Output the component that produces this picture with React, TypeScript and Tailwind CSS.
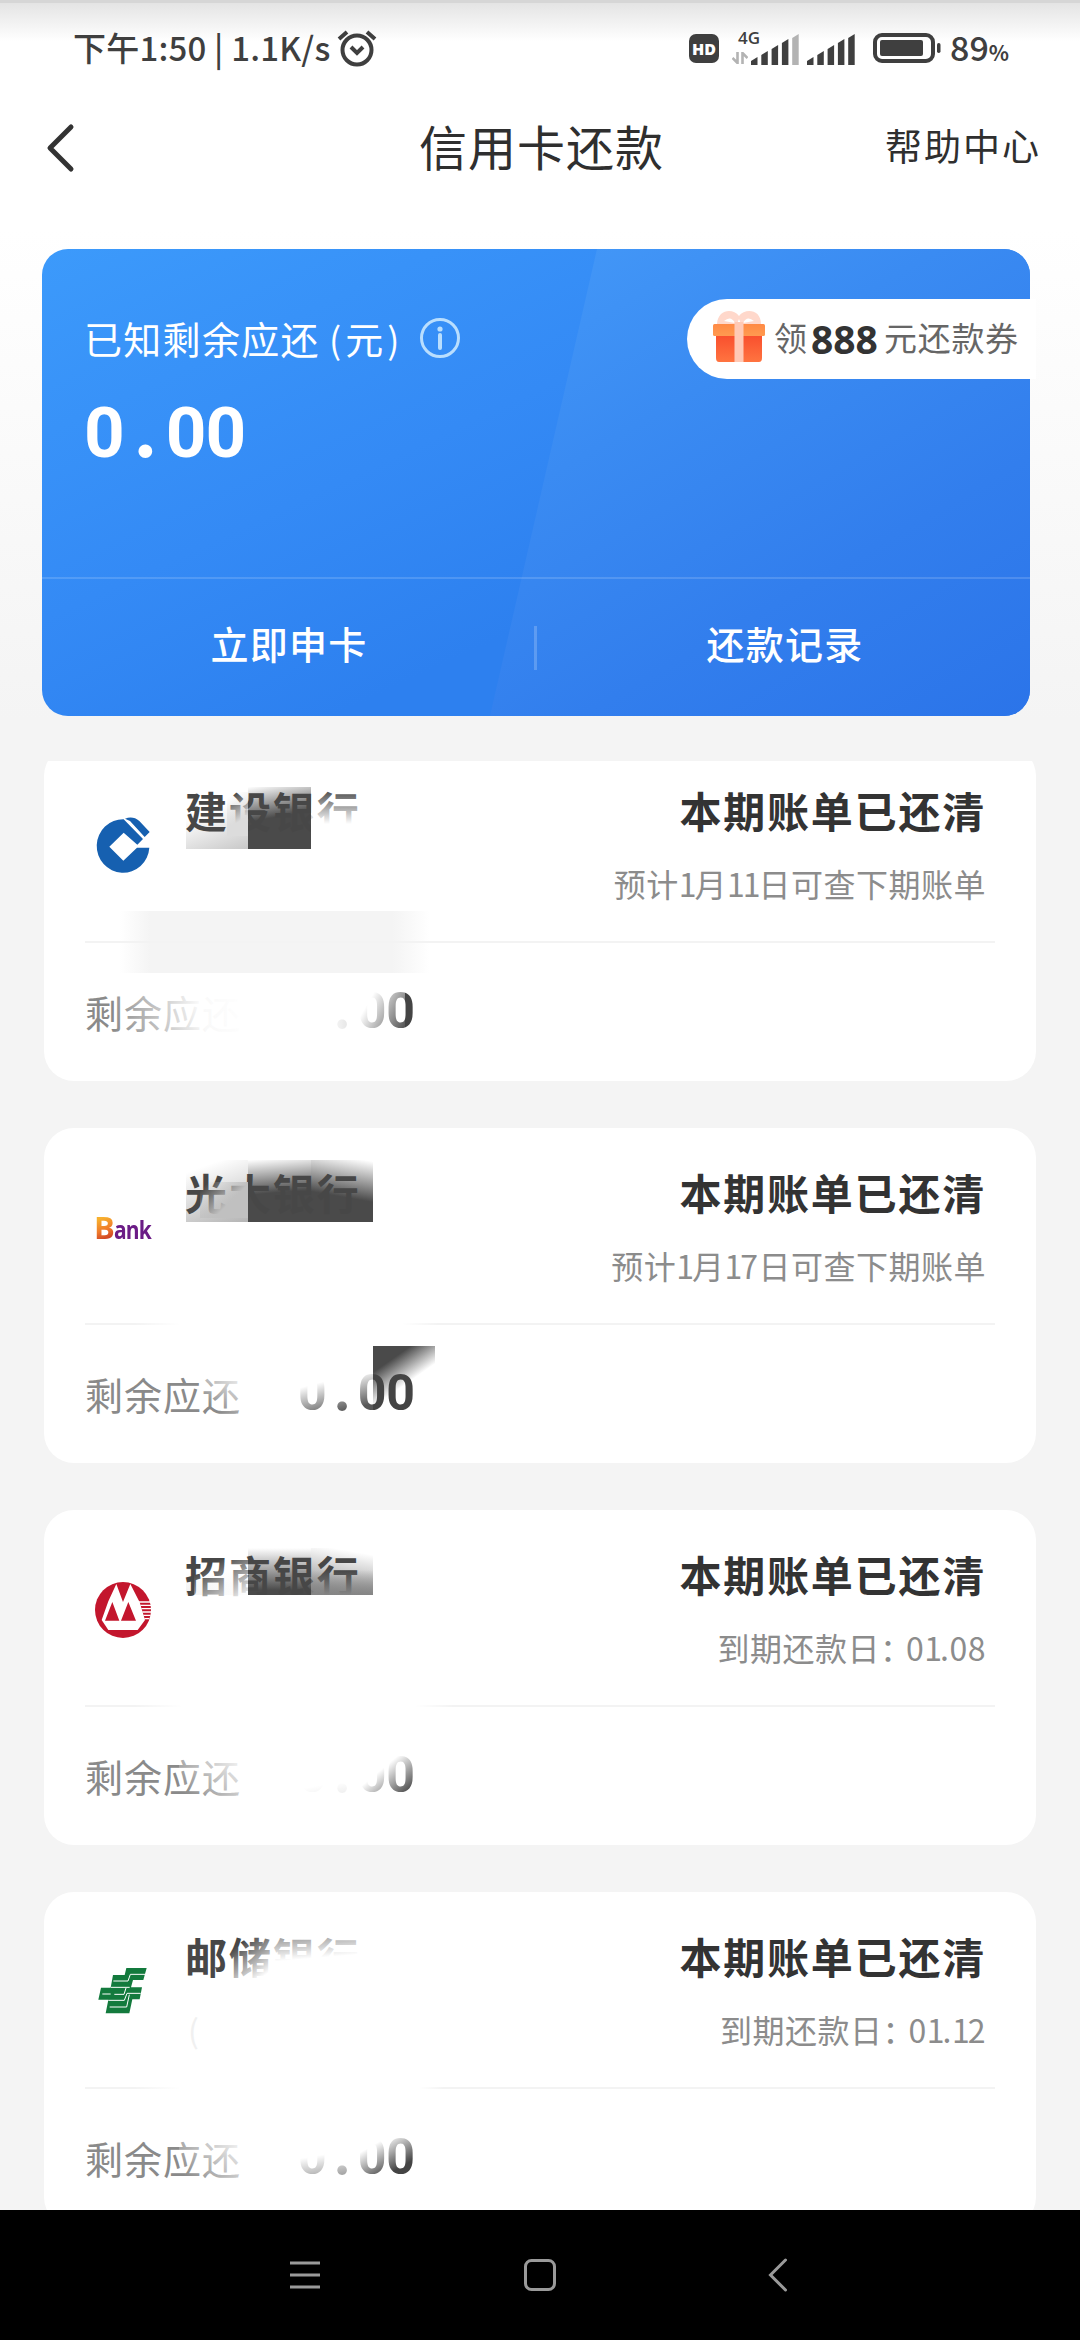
import React from 'react';

interface BankCardData {
  name: string;
  note: string;
  logo: React.ReactNode;
  tail?: string;
  // smudges painted under and over the text
  behind: string[];
  front: string[];
}

const CcbLogo = () => (
  <svg width="60" height="60" viewBox="189 198 180 180" fill="#1660b0">
    <path d="M358 293A79 80 0 1 1 281 208L339 267L322 284L281 248L238 290L280 332L321 293Z" />
    <path d="M285 206Q309 197 328 213L359 246L344 261L300 213Z" />
  </svg>
);

const EverbrightLogo = () => (
  <div className="flex w-[60px] items-baseline pl-px font-['Open_Sans'] text-[25px] leading-[58px] font-bold tracking-[-1px]">
    <span className="bg-[linear-gradient(160deg,#f7b02e_35%,#ef7a2b_55%,#c22f22_75%)] bg-clip-text text-[31px] text-transparent">B</span>
    <span className="origin-left scale-x-[0.84] text-[#6b1c86]">ank</span>
  </div>
);

const CmbLogo = () => (
  <svg width="60" height="60" viewBox="190 238 180 180">
    <circle cx="280" cy="328" r="84" fill="#c3162d" />
    <path d="M260 250L280 304L302 250L330 305L346 358L324 388H236L216 358L236 302Z" fill="#fff" />
    <path d="M248 304L226 360H269ZM296 304L274 360H319Z" fill="#c3162d" />
    <path d="M262 304L271 340L282 304Z" fill="#fff" />
    <path d="M328 304H361M332 314H364M335 324H365M338 334H364M341 344H363M344 354H359" stroke="#fff" strokeWidth="4" />
  </svg>
);

const PostalLogo = () => (
  <svg width="60" height="60" viewBox="190 250 180 180">
    <path
      d="M290 268H351L341 304H310L304 326H337L330 362H308L299 404H228L236 363H206L214 327H243L250 289H285Z"
      fill="#137a3d"
    />
    <path
      d="M251 307H295L302 287H347M244 326H300M218 346H243M254 347H283L289 328M236 365H284L292 344H333M240 385H291L299 348"
      fill="none"
      stroke="#fff"
      strokeWidth="3"
    />
  </svg>
);

const cards: BankCardData[] = [
  {
    name: '建设银行',
    note: '预计1月11日可查下期账单',
    logo: <CcbLogo />,
    behind: [
      'left-[142px] top-[50px] w-[62px] h-[53px] bg-[linear-gradient(160deg,transparent_30%,#c8c8c8)]',
      'left-[204px] top-[41px] w-[63px] h-[62px] bg-[linear-gradient(170deg,transparent,#4a4a4a_48%)]',
      'left-[76px] top-[165px] w-[310px] h-[62px] bg-[linear-gradient(90deg,transparent,#f4f4f4_10%,#f4f4f4_88%,transparent)]',
    ],
    front: [
      'left-[183px] top-[46px] w-[21px] h-[44px] bg-[linear-gradient(150deg,transparent_10%,#dcdcdc_65%)]',
      'left-[267px] top-[42px] w-[64px] h-[48px] bg-[linear-gradient(180deg,rgba(255,255,255,0.1)_10%,#fff_75%)]',
      'left-[70px] top-[240px] w-[130px] h-[50px] bg-[linear-gradient(75deg,transparent,rgba(255,255,255,0.5)_35%,rgba(255,255,255,0.95)_65%,#fff)]',
      'left-[250px] top-[240px] w-[65px] h-[50px] bg-[linear-gradient(90deg,#fff_50%,rgba(255,255,255,0.8))]',
      'left-[315px] top-[240px] w-[46px] h-[50px] bg-[linear-gradient(120deg,#fff_25%,transparent)]',
    ],
  },
  {
    name: '光大银行',
    note: '预计1月17日可查下期账单',
    logo: <EverbrightLogo />,
    behind: [
      'left-[142px] top-[32px] w-[62px] h-[62px] bg-[linear-gradient(160deg,transparent_15%,#b4b4b4)]',
      'left-[204px] top-[32px] w-[63px] h-[62px] bg-[linear-gradient(175deg,transparent,#4a4a4a_52%)]',
      'left-[267px] top-[32px] w-[62px] h-[62px] bg-[linear-gradient(190deg,transparent_2%,#4a4a4a_58%)]',
      'left-[329px] top-[218px] w-[62px] h-[62px] bg-[linear-gradient(145deg,#4a4a4a_25%,transparent_58%)]',
    ],
    front: [
      'left-[156px] top-[54px] w-[48px] h-[36px] bg-[linear-gradient(135deg,transparent_10%,#c0c0c0_60%)]',
      'left-[90px] top-[190px] w-[305px] h-[12px] bg-[linear-gradient(90deg,transparent,#fff_15%,#fff_88%,transparent)]',
      'left-[155px] top-[245px] w-[45px] h-[45px] bg-[linear-gradient(35deg,transparent_25%,#fff)]',
      'left-[250px] top-[240px] w-[79px] h-[50px] bg-[linear-gradient(165deg,#fff_30%,rgba(255,255,255,0.1)_80%)]',
    ],
  },
  {
    name: '招商银行',
    note: '到期还款日：01.08',
    logo: <CmbLogo />,
    behind: [
      'left-[142px] top-[38px] w-[62px] h-[47px] bg-[linear-gradient(180deg,transparent_50%,#f0f0f0)]',
      'left-[204px] top-[38px] w-[63px] h-[47px] bg-[linear-gradient(180deg,transparent,#4a4a4a_90%)]',
      'left-[267px] top-[38px] w-[62px] h-[47px] bg-[linear-gradient(190deg,transparent_12%,#858585)]',
    ],
    front: [
      'left-[150px] top-[50px] w-[54px] h-[40px] bg-[linear-gradient(150deg,transparent_20%,#fff)]',
      'left-[204px] top-[85px] w-[125px] h-[8px] bg-white',
      'left-[267px] top-[60px] w-[62px] h-[25px] bg-[linear-gradient(180deg,transparent,#858585)]',
      'left-[90px] top-[190px] w-[320px] h-[12px] bg-[linear-gradient(90deg,transparent,#fff_15%,#fff_88%,transparent)]',
      'left-[135px] top-[245px] w-[65px] h-[45px] bg-[linear-gradient(45deg,transparent_10%,#fff)]',
      'left-[250px] top-[240px] w-[65px] h-[50px] bg-[linear-gradient(170deg,#fff_65%,rgba(255,255,255,0.85))]',
      'left-[315px] top-[240px] w-[60px] h-[50px] bg-[linear-gradient(140deg,#fff_38%,transparent_85%)]',
    ],
  },
  {
    name: '邮储银行',
    note: '到期还款日：01.12',
    logo: <PostalLogo />,
    tail: '(',
    behind: [],
    front: [
      'left-[186px] top-[40px] w-[41px] h-[56px] bg-[linear-gradient(145deg,transparent_22%,#fff_80%)]',
      'left-[227px] top-[40px] w-[104px] h-[56px] bg-[linear-gradient(175deg,rgba(255,255,255,0.5)_12%,#fff_46%)]',
      'left-[90px] top-[190px] w-[310px] h-[12px] bg-[linear-gradient(90deg,transparent,#fff_15%,#fff_92%,transparent)]',
      'left-[135px] top-[245px] w-[65px] h-[45px] bg-[linear-gradient(45deg,transparent_10%,#fff)]',
      'left-[250px] top-[240px] w-[65px] h-[50px] bg-[linear-gradient(170deg,#fff_45%,rgba(255,255,255,0.3))]',
      'left-[315px] top-[240px] w-[60px] h-[50px] bg-[linear-gradient(150deg,#fff_25%,transparent_70%)]',
    ],
  },
];

const SignalBars = ({ weak = false }: { weak?: boolean }) => (
  <svg width="48" height="31" viewBox="0 0 48 31" fill="#3f3f3f">
    <path d="M0 31V27L6.5 23V31Z" />
    <path d="M10.3 31V21L16.8 17V31Z" />
    <path d="M20.6 31V15L27.1 11V31Z" />
    <path d="M30.9 31V9L37.4 5V31Z" />
    <path d="M41.2 31V4L47.7 0V31Z" fill={weak ? '#b3b3b3' : '#3f3f3f'} />
  </svg>
);

const StatusBar = () => (
  <div className="flex h-[98px] shrink-0 items-start border-t-[3px] border-[#d6d6d6] bg-linear-to-b from-[#e4e4e4] to-white to-40% pl-[73px] text-[#3f3f3f]">
    <span className="mt-[22px] w-[262px] text-[33px] leading-[44px] font-medium tracking-[0.2px] whitespace-nowrap">
      下午1:50 | 1.1K/s
    </span>
    <svg className="mt-[26px] ml-[1px]" width="42" height="38" viewBox="0 0 42 38" fill="none" stroke="#3f3f3f" strokeWidth="4">
      <circle cx="21" cy="21" r="14.5" />
      <path d="M15 18L21 24L27 18M3 10L11 3M31 3L39 10" />
    </svg>
    <div className="mt-[31px] ml-[311px] flex h-[29px] w-[30px] items-center justify-center rounded-[7px] bg-[#3f3f3f] font-['Open_Sans'] text-[16px] font-extrabold text-white">
      HD
    </div>
    <div className="mt-[26px] ml-[13px] flex h-[36px] w-[28px] flex-col items-end">
      <span className="font-['Open_Sans'] text-[17px] leading-[18px] font-semibold">4G</span>
      <svg className="mt-[5px] mr-[12px]" width="16" height="12" viewBox="0 0 16 12" fill="none" stroke="#b3b3b3" strokeWidth="2.6">
        <path d="M5.5 0V11L0.5 6M10.5 12V1L15.5 6" />
      </svg>
    </div>
    <div className="mt-[31px] -ml-[9px] flex gap-[8px]">
      <SignalBars weak />
      <SignalBars />
    </div>
    <svg className="mt-[30px] ml-[18px]" width="68" height="30" viewBox="0 0 68 30">
      <rect x="2" y="2" width="58" height="26" rx="7" fill="none" stroke="#3f3f3f" strokeWidth="4" />
      <rect x="7" y="7" width="43" height="16" rx="2" fill="#3f3f3f" />
      <rect x="64" y="10" width="3.5" height="10" rx="1.7" fill="#3f3f3f" />
    </svg>
    <span className="mt-[22px] ml-[9px] text-[34px] leading-[44px] font-medium">
      89<span className="text-[21px] font-bold">%</span>
    </span>
  </div>
);

const GiftIcon = () => (
  <svg className="-mt-[6px]" width="52" height="54" viewBox="0 0 52 54">
    <defs>
      <linearGradient id="giftLid" x1="0" y1="0" x2="0" y2="1">
        <stop offset="0" stopColor="#ff8a45" />
        <stop offset="1" stopColor="#ff9a50" />
      </linearGradient>
      <linearGradient id="giftBox" x1="0" y1="0" x2="0" y2="1">
        <stop offset="0" stopColor="#f9502e" />
        <stop offset="1" stopColor="#ff7440" />
      </linearGradient>
    </defs>
    <path d="M26 7C20 -1 5 0 4 15H24L26 10L28 15H48C48 0 32 -1 26 7Z" fill="#ffd8cb" />
    <path d="M11 12Q18 6 22 14ZM41 12Q34 6 30 14Z" fill="#fff" />
    <path d="M3 27H49V49Q49 53 46 53H6Q3 53 3 49Z" fill="url(#giftBox)" />
    <rect y="15" width="52" height="12" rx="1.5" fill="url(#giftLid)" />
    <rect x="21.5" y="13" width="9" height="40" fill="#ffc9b5" />
  </svg>
);

// amount with a monospaced point
const Amount = ({ dotClass }: { dotClass: string }) => (
  <>
    0<span className={dotClass}>.</span>00
  </>
);

// narrow ones and colon, as in the phone's system font
const Note = ({ text }: { text: string }) => (
  <>
    {text.split(/(1+|：)/).map((part, i) => {
      if (part.startsWith('1')) return <span key={i} className="tracking-[-2px]">{part}</span>;
      if (part === '：') return <span key={i} className="tracking-[-6px]">{part}</span>;
      return part;
    })}
  </>
);

const SummaryCard = () => (
  <div className="relative mx-[42px] mt-[52px] flex h-[467px] w-[988px] shrink-0 flex-col rounded-[26px] bg-[linear-gradient(155deg,#3c9afb,#348af5_40%,#2d80ef_65%,#2d80ef)] text-white">
    <div className="absolute inset-0 rounded-[26px] bg-[linear-gradient(150deg,#4499f8_25%,#3a8bf2_50%,#327eed_75%,#2b74e9)] [clip-path:polygon(555px_0,100%_0,100%_100%,448px_100%)]" />
    <div className="relative flex h-[328px] flex-col pl-[42px]">
      <div className="mt-[67px] flex items-center">
        <span className="w-[239px] text-[38px] leading-[44px] tracking-[1.3px] whitespace-nowrap">已知剩余应还</span>
        <span className="ml-[6px] text-[36px] leading-[44px]">(</span>
        <span className="ml-[4px] text-[38px] leading-[44px]">元</span>
        <span className="ml-[4px] text-[36px] leading-[44px]">)</span>
        <svg className="ml-[20px]" width="42" height="42" viewBox="0 0 42 42" fill="none" stroke="#b9defe" strokeWidth="3">
          <circle cx="21" cy="21" r="18.5" />
          <path d="M21 18V31" strokeWidth="4" strokeLinecap="round" />
          <circle cx="21" cy="12" r="2.6" fill="#b9defe" stroke="none" />
        </svg>
      </div>
      <span className="mt-[28px] font-['Roboto'] text-[71px] leading-[80px] font-bold tracking-[-1px]">
        <Amount dotClass="inline-block w-[42px] text-center font-['Inter'] text-[80px] leading-none" />
      </span>
    </div>
    <div className="relative flex flex-1 items-center border-t-[2px] border-white/15 text-[38px] font-medium">
      <span className="flex-1 pb-[10px] pl-[2px] text-center tracking-[1.3px]">立即申卡</span>
      <i className="h-[44px] w-[3px] bg-white/20" />
      <span className="flex-1 pb-[10px] pl-[3px] text-center tracking-[1.3px]">还款记录</span>
    </div>
    <div className="absolute top-[50px] left-[645px] flex h-[80px] w-[349px] items-center rounded-l-full bg-white pl-[26px] text-[33px] text-[#666]">
      <GiftIcon />
      <span className="-mt-[2px] ml-[9px]">领</span>
      <b className="ml-[4px] w-[72px] font-['Open_Sans'] text-[39px] leading-[60px] text-[#333]">888</b>
      <span className="-mt-[2px] ml-[1px] tracking-[0.7px] whitespace-nowrap">元还款券</span>
    </div>
  </div>
);

const BankCard = ({ card }: { card: BankCardData }) => (
  <div className="relative h-[335px] shrink-0 rounded-[30px] bg-white">
    {card.behind.map((cls) => (
      <div key={cls} className={`absolute ${cls}`} />
    ))}
    <div className="relative mx-[41px] flex h-[197px] border-b-[2px] border-[#f3f3f3]">
      <div className="mt-[70px] ml-[8px] h-[60px] w-[60px]">{card.logo}</div>
      <div className="mt-[34px] ml-[32px] flex flex-col">
        <span className="text-[42px] leading-[60px] font-bold tracking-[1.9px] text-[#474747]">{card.name}</span>
        <span className="mt-[20px] ml-[3px] text-[32px] leading-[46px] text-[#f0f0f0]">{card.tail}</span>
      </div>
      <div className="mt-[34px] mr-[9px] ml-auto flex flex-col items-end">
        <span className="text-[42px] leading-[60px] font-bold tracking-[1.8px] text-[#333]">本期账单已还清</span>
        <span className="mt-[20px] text-[32px] leading-[46px] tracking-[0.5px] text-[#8c8c8c]">
          <Note text={card.note} />
        </span>
      </div>
    </div>
    <div className="relative flex items-center pt-[41px] pl-[41px]">
      <span className="w-[213px] text-[38px] leading-[56px] tracking-[1px] text-[#8a8a8a]">剩余应还</span>
      <span className="-mt-[9px] h-[56px] font-['Roboto'] text-[50px] leading-[56px] font-bold text-[#444]">
        <Amount dotClass="inline-block w-[31px] text-center font-['Inter'] text-[56px] leading-none" />
      </span>
    </div>
    {card.front.map((cls) => (
      <div key={cls} className={`absolute ${cls}`} />
    ))}
  </div>
);

const NavBar = () => (
  <div className="flex h-[130px] shrink-0 items-center bg-black pl-[289px]">
    <svg width="32" height="34" viewBox="0 0 32 34" stroke="#9a9a9a" strokeWidth="3">
      <path d="M1 5H31M1 17H31M1 29H31" />
    </svg>
    <svg className="ml-[202px]" width="34" height="34" viewBox="0 0 34 34" fill="none" stroke="#9a9a9a" strokeWidth="3">
      <rect x="2.5" y="2.5" width="29" height="29" rx="6" />
    </svg>
    <svg className="ml-[211px]" width="20" height="34" viewBox="0 0 20 34" fill="none" stroke="#9a9a9a" strokeWidth="3" strokeLinecap="round">
      <path d="M17.5 2L2.5 17L17.5 32" />
    </svg>
  </div>
);

const App: React.FC = () => {
  return (
    <div className="flex h-[2340px] w-[1080px] flex-col overflow-hidden bg-[linear-gradient(180deg,#fff_230px,#f4f4f4_720px)] font-['Noto_Sans_CJK_SC',sans-serif]">
      <StatusBar />
      <header className="flex h-[99px] shrink-0 items-center bg-white text-[#2f2f2f]">
        <svg className="ml-[45px]" width="32" height="50" viewBox="0 0 32 50" fill="none" stroke="#333" strokeWidth="5" strokeLinecap="round" strokeLinejoin="round">
          <path d="M26 4L5 25L26 46" />
        </svg>
        <h1 className="-mt-[5px] ml-[342px] w-[246px] text-[48px] tracking-[1px] whitespace-nowrap">信用卡还款</h1>
        <span className="-mt-[3px] mr-[39px] ml-auto text-[37px] tracking-[2px]">帮助中心</span>
      </header>
      <SummaryCard />
      <main className="mx-[44px] mt-[45px] flex w-[992px] flex-1 flex-col overflow-hidden">
        <div className="-mt-[15px] flex flex-col gap-[47px]">
          {cards.map((card) => (
            <BankCard key={card.name} card={card} />
          ))}
        </div>
      </main>
      <NavBar />
    </div>
  );
};

export default App;
